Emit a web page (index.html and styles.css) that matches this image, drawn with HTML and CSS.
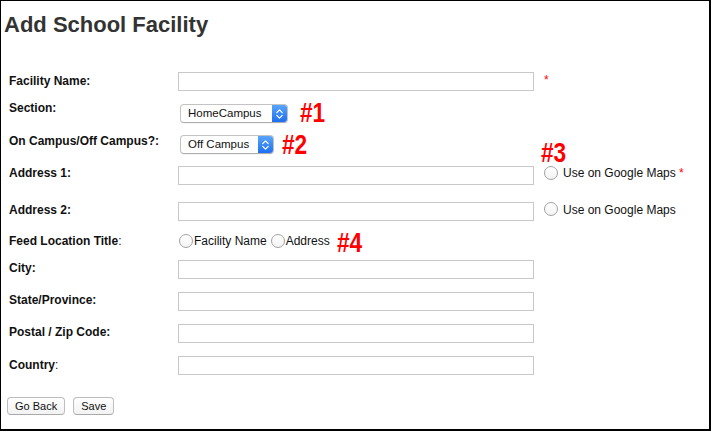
FILE: index.html
```html
<!DOCTYPE html>
<html>
<head>
<meta charset="utf-8">
<title>Add School Facility</title>
<link rel="stylesheet" href="styles.css">
</head>
<body>
<div class="frame">
  <h1 class="title">Add School Facility</h1>
  <form class="form">
    <div class="row row-name">
      <label class="label mt-2">Facility Name:</label>
      <input class="text-input" type="text">
      <span class="required req-name">*</span>
    </div>
    <div class="row row-section">
      <label class="label">Section:</label>
      <span class="select select-section mt-3">
        <span class="select-value">HomeCampus</span>
        <span class="select-arrow"><svg width="15" height="18" viewBox="0 0 15 18"><path d="M4.8 7.6 L7.5 4.9 L10.2 7.6 M4.8 10.4 L7.5 13.1 L10.2 10.4" fill="none" stroke="#fff" stroke-width="1.3" stroke-linecap="round" stroke-linejoin="round"/></svg></span>
      </span>
      <span class="note note-1 mt-2">#1</span>
    </div>
    <div class="row row-campus">
      <label class="label">On Campus/Off Campus?:</label>
      <span class="select select-campus mt-1">
        <span class="select-value">Off Campus</span>
        <span class="select-arrow"><svg width="15" height="18" viewBox="0 0 15 18"><path d="M4.8 7.6 L7.5 4.9 L10.2 7.6 M4.8 10.4 L7.5 13.1 L10.2 10.4" fill="none" stroke="#fff" stroke-width="1.3" stroke-linecap="round" stroke-linejoin="round"/></svg></span>
      </span>
      <span class="note note-2 mt-1">#2</span>
    </div>
    <div class="row row-addr1">
      <label class="label">Address 1:</label>
      <input class="text-input mt-3" type="text">
      <div class="side">
        <span class="note note-3">#3</span>
        <input class="radio mt-3" type="radio" name="maps">
        <span class="option-text side-text">Use on Google Maps <span class="required">*</span></span>
      </div>
    </div>
    <div class="row row-addr2">
      <label class="label mt-1">Address 2:</label>
      <input class="text-input" type="text">
      <div class="side">
        <input class="radio mt-3" type="radio" name="maps">
        <span class="option-text side-text mt-1">Use on Google Maps</span>
      </div>
    </div>
    <div class="row row-feed">
      <label class="label mt-1">Feed Location Title<span class="colon">:</span></label>
      <div class="radio-group mt-1">
        <label class="radio-option"><input class="radio" type="radio" name="feed"><span class="option-text">Facility Name</span></label>
        <label class="radio-option"><input class="radio" type="radio" name="feed"><span class="option-text">Address</span></label>
        <span class="note note-4">#4</span>
      </div>
    </div>
    <div class="row row-std">
      <label class="label mt-1">City:</label>
      <input class="text-input" type="text">
    </div>
    <div class="row row-std">
      <label class="label mt-1">State/Province:</label>
      <input class="text-input" type="text">
    </div>
    <div class="row row-std">
      <label class="label mt-1">Postal / Zip Code:</label>
      <input class="text-input" type="text">
    </div>
    <div class="row row-country">
      <label class="label mt-2">Country<span class="colon">:</span></label>
      <input class="text-input" type="text">
    </div>
    <div class="buttons">
      <button class="btn" type="button">Go Back</button>
      <button class="btn" type="button">Save</button>
    </div>
  </form>
</div>
</body>
</html>
```
FILE: styles.css
```css
* { box-sizing: border-box; }
html, body { margin: 0; padding: 0; background: #fff; }
body { font-family: "Liberation Sans", Arial, Helvetica, sans-serif; }

.frame {
  width: 711px;
  height: 431px;
  border-style: solid;
  border-color: #000;
  border-width: 1px 2px 2px 1px;
  padding: 0 0 0 3px;
  overflow: hidden;
}

.title {
  margin: 11px 0 0;
  font: bold 22px/26px "Liberation Sans", Arial, sans-serif;
  color: #333;
}

.form { margin: 34px 0 0; }

.row {
  display: flex;
  align-items: flex-start;
  padding-left: 5px;
}
.row-name { height: 29px; }
.row-section { height: 33px; }
.row-campus { height: 32px; }
.row-addr1 { height: 36px; }
.row-addr2 { height: 31px; }
.row-feed { height: 27px; }
.row-std { height: 32px; }
.row-country { height: 41px; }

.mt-1 { margin-top: 1px; }
.mt-2 { margin-top: 2px; }
.mt-3 { margin-top: 3px; }

.label {
  flex: none;
  width: 169px;
  font: bold 12px/14px "Liberation Sans", Arial, sans-serif;
  color: #111;
}
.colon { font-weight: normal; }

.text-input {
  flex: none;
  width: 356px;
  height: 19px;
  margin: 0;
  padding: 0 3px;
  border: 1px solid #c8c8c8;
  border-radius: 0;
  background: #fff;
  font: 12px "Liberation Sans", Arial, sans-serif;
  outline: none;
}

.required {
  color: #f00;
  font: 12px/14px "Liberation Sans", Arial, sans-serif;
}
.req-name { margin-left: 10px; margin-top: 1px; }

.select {
  flex: none;
  display: flex;
  height: 19px;
  margin-left: 2px;
  border: 1px solid #c3c3c3;
  border-bottom-color: #adadad;
  border-radius: 4px;
  overflow: hidden;
  background: #fff;
  box-shadow: 0 1px 0 rgba(0,0,0,0.04);
}
.select-section { width: 108px; }
.select-campus { width: 94px; }
.select-value {
  flex: 1;
  padding-left: 7px;
  font: 11.5px/17px "Liberation Sans", Arial, sans-serif;
  color: #111;
  white-space: nowrap;
}
.select-arrow {
  flex: none;
  width: 15px;
  height: 17px;
  display: flex;
  align-items: center;
  justify-content: center;
  background: linear-gradient(#59a5fb, #1e6ff1);
}
.select-arrow svg { display: block; }

.note {
  flex: none;
  display: inline-block;
  color: #f00;
  font: bold 27px/20px "Liberation Sans", Arial, sans-serif;
  transform: scaleX(0.84);
  transform-origin: 0 0;
  width: 26px;
}
.note-1 { margin-left: 12px; }
.note-2 { margin-left: 8px; }

.side {
  position: relative;
  display: flex;
  align-items: flex-start;
  margin-left: 10px;
}
.note-3 {
  position: absolute;
  left: -3px;
  top: -23px;
}

.radio {
  -webkit-appearance: none;
  appearance: none;
  flex: none;
  width: 14px;
  height: 14px;
  margin: 0;
  border: 1px solid #a2a2a2;
  border-radius: 50%;
  background: linear-gradient(#ffffff, #f3f3f3);
}

.option-text {
  font: 12px/14px "Liberation Sans", Arial, sans-serif;
  color: #111;
  white-space: nowrap;
}
.side-text { margin-left: 5px; }

.radio-group {
  display: flex;
  align-items: flex-start;
  margin-left: 1px;
}
.radio-option {
  display: flex;
  align-items: center;
  height: 14px;
  margin-right: 4px;
}
.radio-option .radio { margin-right: 1px; }
.radio-group .note-4 { margin-left: 3px; margin-top: -1px; }

.buttons {
  display: flex;
  gap: 8px;
  padding-left: 3px;
}
.btn {
  height: 18px;
  margin: 0;
  padding: 0 7px;
  border: 1px solid #bdbdbd;
  border-bottom-color: #a9a9a9;
  border-radius: 4px;
  background: linear-gradient(#ffffff, #f2f2f2);
  font: 11px/16px "Liberation Sans", Arial, sans-serif;
  color: #111;
}
```
